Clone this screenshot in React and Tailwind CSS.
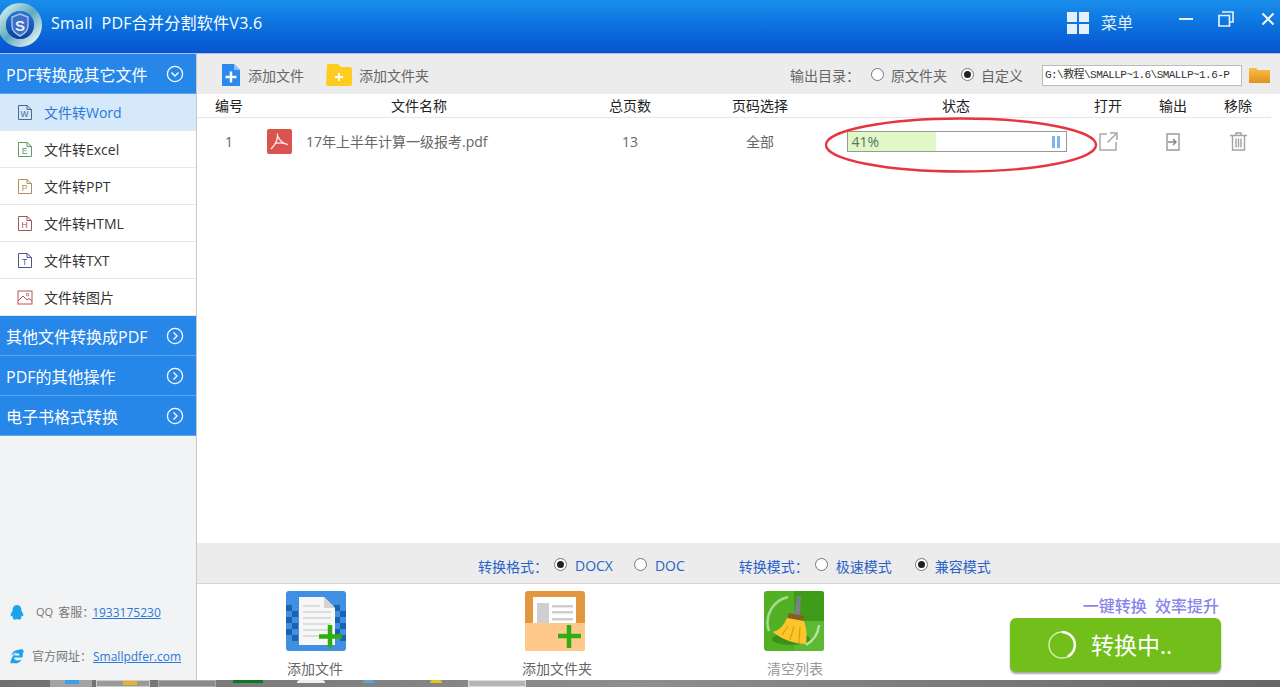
import React from "react";

const FONT = { fontFamily: '"Open Sans","Noto Sans CJK SC",sans-serif' };

function Logo() {
  return (
    <svg width="44" height="46" viewBox="0 0 44 46" className="shrink-0 mt-[3px]">
      <defs>
        <linearGradient id="ring" x1="0" y1="0" x2="1" y2="1">
          <stop offset="0" stopColor="#d5f0ea" />
          <stop offset="0.5" stopColor="#5fa9bd" />
          <stop offset="1" stopColor="#eef8f2" />
        </linearGradient>
        <linearGradient id="ball" x1="0" y1="0" x2="0" y2="1">
          <stop offset="0" stopColor="#2b76d8" />
          <stop offset="1" stopColor="#0e3f9f" />
        </linearGradient>
      </defs>
      <circle cx="20" cy="23" r="18" fill="none" stroke="url(#ring)" strokeWidth="8" />
      <circle cx="20" cy="23" r="14" fill="url(#ball)" />
      <path d="M20 12 L28 15 V24 C28 29 24 32 20 34 C16 32 12 29 12 24 V15 Z" fill="#3d6fc4" stroke="#a9c7ee" strokeWidth="1.4" />
      <text x="20" y="29" textAnchor="middle" fontSize="15" fontWeight="700" fill="#e6f0fb" fontFamily="Liberation Sans">S</text>
    </svg>
  );
}

function Circle({ down }) {
  return (
    <svg width="18" height="18" viewBox="0 0 18 18" className="shrink-0">
      <circle cx="9" cy="9" r="7.6" fill="none" stroke="#fff" strokeWidth="1.3" />
      {down ? (
        <path d="M5.5 7.5 L9 11 L12.5 7.5" fill="none" stroke="#fff" strokeWidth="1.4" />
      ) : (
        <path d="M7.5 5.5 L11 9 L7.5 12.5" fill="none" stroke="#fff" strokeWidth="1.4" />
      )}
    </svg>
  );
}

function DocIcon({ letter, color }) {
  return (
    <svg width="16" height="17" viewBox="0 0 16 17" className="shrink-0">
      <path d="M1.5 1.5 H10 L14.5 5.5 V15.5 H1.5 Z M10 1.5 V5.5 H14.5" fill="none" stroke={color} strokeWidth="1" />
      <text x="7.5" y="13" textAnchor="middle" fontSize="8.5" fill={color} fontFamily="Liberation Sans">{letter}</text>
    </svg>
  );
}

function PicIcon() {
  const c = "#b5545c";
  return (
    <svg width="16" height="15" viewBox="0 0 16 15" className="shrink-0">
      <rect x="1" y="1" width="14" height="13" fill="none" stroke={c} strokeWidth="1" />
      <path d="M1 11 L6 6 L10 10 L12 8.5 L15 11" fill="none" stroke={c} strokeWidth="1" />
      <circle cx="10.5" cy="4.5" r="1.3" fill="none" stroke={c} strokeWidth="0.9" />
    </svg>
  );
}

function SectionHead({ label, down }) {
  return (
    <div className="flex items-center justify-between h-[40px] bg-[#2787e8] border-b border-[#5aa5ee] pl-[6px] pr-[12px] text-white text-[16px]">
      <span className="pt-[2px]">{label}</span>
      <Circle down={down} />
    </div>
  );
}

function NavItem({ label, icon, active }) {
  return (
    <div className={`flex items-center h-[37px] pl-[17px] gap-[11px] text-[14px] border-b border-[#e8e8e8] ${active ? "bg-[#d6e9fb] text-[#2a78d8]" : "bg-white text-[#333]"}`}>
      {icon}
      <span>{label}</span>
    </div>
  );
}

function Radio({ on }) {
  return (
    <span className="flex items-center justify-center w-[13px] h-[13px] rounded-full border border-[#777] bg-white shrink-0">
      {on && <span className="block w-[7px] h-[7px] rounded-full bg-[#222]" />}
    </span>
  );
}

function PdfIcon() {
  return (
    <svg width="25" height="25" viewBox="0 0 25 25">
      <rect x="0" y="0" width="25" height="25" rx="2" fill="#d9534f" />
      <path d="M10.5 4.5 C11 9 9 15 4 20 M8.5 14.5 C13 13 17 14 21 15.5 M11 7.5 C12 10 15 14 20.5 15.5" fill="none" stroke="#fbe9e7" strokeWidth="1.3" />
    </svg>
  );
}

function BigFile() {
  const squares = [];
  for (let r = 0; r < 6; r++) {
    for (let c = 0; c < 2; c++) {
      if ((r + c) % 2 === 0) {
        squares.push(<rect key={`l${r}${c}`} x={c * 6} y={14 + r * 6} width="6" height="6" fill="#1c62ae" />);
        squares.push(<rect key={`r${r}${c}`} x={48 + c * 6} y={14 + r * 6} width="6" height="6" fill="#1c62ae" />);
      }
    }
  }
  return (
    <svg width="60" height="60" viewBox="0 0 60 60">
      <rect width="60" height="60" rx="3" fill="#3f8fe2" />
      {squares}
      <path d="M13 6 H38 L49 17 V54 H13 Z" fill="#f6f6f6" />
      <path d="M38 6 L49 17 H38 Z" fill="#d6d2cc" />
      {[14, 20, 26, 32, 38, 44].map((y) => (
        <rect key={y} x="17" y={y} width={y < 20 ? 17 : 28} height="2" fill="#dcdcdc" />
      ))}
      <path d="M44 34 V57 M33 45.5 H56" stroke="#2fae12" strokeWidth="4.5" />
    </svg>
  );
}

function BigFolder() {
  return (
    <svg width="60" height="60" viewBox="0 0 60 60">
      <rect width="60" height="60" rx="3" fill="#e2973f" />
      <rect x="8" y="6" width="43" height="36" fill="#fff" />
      <rect x="12" y="12" width="12" height="24" fill="#cfcfcf" />
      {[14, 20, 27, 33].map((y) => (
        <rect key={y} x="27" y={y} width="21" height="2.5" fill="#cfcfcf" />
      ))}
      <path d="M0 32 H60 V57 A3 3 0 0 1 57 60 H3 A3 3 0 0 1 0 57 Z" fill="#ffc98c" />
      <path d="M44 34 V57 M33 45 H56" stroke="#2fae12" strokeWidth="4.5" />
    </svg>
  );
}

function BigBroom() {
  return (
    <svg width="60" height="60" viewBox="0 0 60 60">
      <rect width="60" height="60" rx="3" fill="#52b025" />
      <path d="M30 0 H57 A3 3 0 0 1 60 3 V30 H30 Z" fill="#3f9c18" />
      <path d="M30 30 H60 V57 A3 3 0 0 1 57 60 H30 Z" fill="#64bb38" opacity="0.75" />
      <path d="M5 40 A26 26 0 0 1 24 6" fill="none" stroke="#a8d98c" strokeWidth="2.5" />
      <path d="M55 34 A26 26 0 0 1 42 54" fill="none" stroke="#b8e2a0" strokeWidth="2.5" />
      <ellipse cx="27" cy="48" rx="19" ry="6" fill="#2e8412" opacity="0.7" />
      <path d="M33 5 L37 5 L36 24 L30 24 Z" fill="#78808a" />
      <path d="M25 22 L40 25 L39 31 L23 28 Z" fill="#8a5d22" />
      <path d="M23 27 L40 30 C43 38 43 46 42 53 C32 53 18 49 9 41 C16 39 20 34 23 27 Z" fill="#fcc62a" />
      <path d="M24 35 L18 44 M30 35 L26 49 M36 36 L35 52" stroke="#e09d14" strokeWidth="1.2" />
    </svg>
  );
}

const cols = "grid grid-cols-[64px_316px_106px_154px_238px_66px_64px_66px]";

export default function App() {
  return (
    <div className="relative w-[1280px] h-[687px] overflow-hidden flex flex-col bg-white" style={FONT}>
      {/* title bar */}
      <header className="h-[54px] shrink-0 flex items-center pb-[7px] bg-gradient-to-b from-[#1a8eec] to-[#0a52cf] border-b border-[#9cc4ee] text-white">
        <Logo />
        <h1 className="ml-[7px] text-[16px] tracking-[0.25px] font-normal">Small&nbsp; PDF合并分割软件V3.6</h1>
        <div className="ml-auto flex items-center">
          <svg width="22" height="22" viewBox="0 0 22 22">
            <path d="M0 0 H10 V10 H0 Z M12 0 H22 V10 H12 Z M0 12 H10 V22 H0 Z M12 12 H22 V22 H12 Z" fill="#e6f0fb" />
          </svg>
          <span className="ml-[12px] text-[16px] text-[#e6f0fb]">菜单</span>
          <svg width="14" height="14" viewBox="0 0 14 14" className="ml-[46px] mb-[8px]">
            <rect x="0" y="6" width="14" height="2" fill="#e6f0fb" />
          </svg>
          <svg width="16" height="16" viewBox="0 0 16 16" className="ml-[25px] mb-[8px]">
            <path d="M4 1 H15 V11 H12 M1 4.5 H11.5 V15 H1 Z" fill="none" stroke="#e6f0fb" strokeWidth="1.7" />
          </svg>
          <svg width="14" height="14" viewBox="0 0 14 14" className="ml-[27px] mr-[5px] mb-[8px]">
            <path d="M1.5 1.5 L12.5 12.5 M12.5 1.5 L1.5 12.5" stroke="#f4f8fd" strokeWidth="2" />
          </svg>
        </div>
      </header>

      <div className="flex flex-1 min-h-0">
        {/* sidebar */}
        <aside className="w-[197px] shrink-0 flex flex-col bg-[#f1f3f4] border-r border-[#c8c8c8]">
          <SectionHead label="PDF转换成其它文件" down />
          <NavItem active label="文件转Word" icon={<DocIcon letter="W" color="#4a6a8a" />} />
          <NavItem label="文件转Excel" icon={<DocIcon letter="E" color="#5d9c62" />} />
          <NavItem label="文件转PPT" icon={<DocIcon letter="P" color="#b08f5e" />} />
          <NavItem label="文件转HTML" icon={<DocIcon letter="H" color="#a3525e" />} />
          <NavItem label="文件转TXT" icon={<DocIcon letter="T" color="#4a5590" />} />
          <NavItem label="文件转图片" icon={<PicIcon />} />
          <SectionHead label="其他文件转换成PDF" />
          <SectionHead label="PDF的其他操作" />
          <SectionHead label="电子书格式转换" />

          <div className="mt-auto flex flex-col text-[12px] text-[#777] pl-[10px] pb-[15px] gap-[27px]">
            <div className="flex items-center h-[17px]">
              <svg width="14" height="15" viewBox="0 0 14 15" className="shrink-0">
                <path d="M7 0 C10.5 0 11.5 3 11.5 6 C13 8 14 10.5 13 11.5 L11.5 10.5 C11.5 12 11 13 11 13.5 C11.5 14.5 8.5 15 7 14 C5.5 15 2.5 14.5 3 13.5 C3 13 2.5 12 2.5 10.5 L1 11.5 C0 10.5 1 8 2.5 6 C2.5 3 3.5 0 7 0 Z" fill="#1ba3ec" />
              </svg>
              <span className="ml-[12px] text-[11px]">QQ</span>
              <span className="ml-[5px]">客服：</span>
              <a className="-ml-[2px] text-[#2a78d8] underline">1933175230</a>
            </div>
            <div className="flex items-center h-[17px]">
              <svg width="14" height="15" viewBox="0 0 14 15" className="shrink-0">
                <path d="M12.5 8.5 H4 C4 11.5 8 12.5 11.5 10.5 C10 14 6 15 3 14 C1.5 15 0 14.5 0.5 12.5 C1 10 3 6 6.5 3.5 C4.5 3.5 2.5 5.5 1.5 7 C2 3 5 1 8 1 C10 0 13 0 13.5 1.5 C14 3 13 4 12.5 4.5 C13.5 6 12.5 7 12.5 8.5 Z M4.5 6.5 H9.5 C9.5 3.5 5 3.5 4.5 6.5 Z" fill="#1ba3ec" fillRule="evenodd" />
              </svg>
              <span className="ml-[8px]">官方网址：</span>
              <a className="ml-[1px] text-[#2a78d8] underline">Smallpdfer.com</a>
            </div>
          </div>
        </aside>

        {/* main */}
        <main className="flex-1 min-w-0 flex flex-col">
          <div className="h-[40px] shrink-0 flex items-center bg-[#ececec] text-[14px] text-[#666] pl-[25px] pr-[10px] pt-[2px]">
            <svg width="18" height="22" viewBox="0 0 18 22" className="shrink-0">
              <path d="M0 0 H12 L18 6 V22 H0 Z" fill="#2b88ef" />
              <path d="M12 0 L18 6 H12 Z" fill="#8fc0f7" />
              <path d="M9 7.5 V18.5 M3.5 13 H14.5" stroke="#fff" strokeWidth="2.4" />
            </svg>
            <span className="ml-[8px] pt-[1px]">添加文件</span>
            <svg width="26" height="22" viewBox="0 0 26 22" className="ml-[22px] shrink-0">
              <path d="M1 1 A1 1 0 0 1 2 0 H12 L15 3 H24 A2 2 0 0 1 26 5 V20 A2 2 0 0 1 24 22 H2 A2 2 0 0 1 0 20 Z" fill="#ffcb1f" />
              <path d="M13 9 V17 M9 13 H17" stroke="#fff" strokeWidth="2" />
            </svg>
            <span className="ml-[7px] pt-[1px]">添加文件夹</span>
            <div className="ml-auto flex items-center">
              <span className="pt-[1px]">输出目录：</span>
              <span className="ml-[11px] mb-[2px]"><Radio /></span>
              <span className="ml-[7px] pt-[1px]">原文件夹</span>
              <span className="ml-[14px] mb-[2px]"><Radio on /></span>
              <span className="ml-[7px] pt-[1px]">自定义</span>
              <div className="ml-[19px] w-[200px] h-[21px] bg-white border border-[#bbb] pl-[2px] text-[11px] leading-[19px] text-[#333] overflow-hidden whitespace-nowrap" style={{ fontFamily: '"Liberation Mono","Noto Sans CJK SC",monospace', letterSpacing: "-0.55px" }}>
                G:\教程\SMALLP~1.6\SMALLP~1.6-P
              </div>
              <svg width="21" height="16" viewBox="0 0 21 16" className="ml-[7px]">
                <defs>
                  <linearGradient id="fold" x1="0" y1="0" x2="0" y2="1">
                    <stop offset="0" stopColor="#f7c04a" />
                    <stop offset="1" stopColor="#e2911a" />
                  </linearGradient>
                </defs>
                <path d="M0 1 H7 L9 3 H21 V16 H0 Z" fill="url(#fold)" />
              </svg>
            </div>
          </div>

          <div className={`${cols} h-[24px] shrink-0 items-center text-center text-[14px] text-[#222] border-b border-[#e6e6e6] w-[1074px]`}>
            <span>编号</span>
            <span>文件名称</span>
            <span>总页数</span>
            <span>页码选择</span>
            <span>状态</span>
            <span>打开</span>
            <span>输出</span>
            <span>移除</span>
          </div>

          <div className={`${cols} h-[47px] shrink-0 items-center text-center text-[14px] text-[#666] w-[1074px]`}>
            <span>1</span>
            <div className="flex items-center pl-[6px] text-left">
              <PdfIcon />
              <span className="ml-[14px] whitespace-nowrap">17年上半年计算一级报考.pdf</span>
            </div>
            <span>13</span>
            <span>全部</span>
            <div className="flex justify-center pl-[1px]">
              <div className="w-[220px] h-[21px] border border-[#999] bg-white flex items-center">
                <div className="w-[88px] h-full bg-[#e1f7c8] pl-[4px] text-[14px] text-[#55775a] leading-[20px] text-left">41%</div>
                <span className="ml-auto mr-[6px] flex gap-[2px]">
                  <span className="block w-[3px] h-[12px] bg-[#7fb3ea]" />
                  <span className="block w-[3px] h-[12px] bg-[#7fb3ea]" />
                </span>
              </div>
            </div>
            <div className="flex justify-center">
              <svg width="19" height="19" viewBox="0 0 19 19">
                <path d="M8 2 H1 V18 H17 V10 M11 1 H18 V8 M18 1 L8.5 10.5" fill="none" stroke="#a8a8a8" strokeWidth="1.5" />
              </svg>
            </div>
            <div className="flex justify-center">
              <svg width="14" height="18" viewBox="0 0 14 18">
                <path d="M1 1 H13 V17 H1 Z" fill="none" stroke="#999" strokeWidth="1.4" />
                <path d="M2 9 H9 M7 6 L10 9 L7 12" fill="none" stroke="#888" strokeWidth="1.5" />
              </svg>
            </div>
            <div className="flex justify-center">
              <svg width="17" height="19" viewBox="0 0 17 19">
                <path d="M0 3.5 H17 M6 3.5 V1 H11 V3.5 M2.5 3.5 V18 H14.5 V3.5 M6 6.5 V15.5 M8.5 6.5 V15.5 M11 6.5 V15.5" fill="none" stroke="#a2a2a2" strokeWidth="1.4" />
              </svg>
            </div>
          </div>

          <div className="flex-1" />

          <div className="h-[41px] shrink-0 flex items-center bg-[#ececec] border-b border-[#d5d5d5] text-[14px] text-[#2a62c8] pl-[281px] pt-[6px]">
            <span>转换格式：</span>
            <span className="ml-[6px] mb-[4px]"><Radio on /></span>
            <span className="ml-[8px] mb-[2px]">DOCX</span>
            <span className="ml-[21px] mb-[4px]"><Radio /></span>
            <span className="ml-[8px] mb-[2px]">DOC</span>
            <span className="ml-[54px]">转换模式：</span>
            <span className="ml-[6px] mb-[4px]"><Radio /></span>
            <span className="ml-[8px]">极速模式</span>
            <span className="ml-[23px] mb-[4px]"><Radio on /></span>
            <span className="ml-[7px]">兼容模式</span>
          </div>

          <div className="h-[96px] shrink-0 flex items-start bg-white pt-[7px] text-[14px] pl-[59px] pr-[59px]">
            <div className="w-[120px] flex flex-col items-center text-[#666] gap-[7px]">
              <BigFile />
              <span className="pr-[2px]">添加文件</span>
            </div>
            <div className="ml-[119px] w-[120px] flex flex-col items-center text-[#666] gap-[7px]">
              <BigFolder />
              <span className="pl-[4px]">添加文件夹</span>
            </div>
            <div className="ml-[119px] w-[120px] flex flex-col items-center text-[#999] gap-[7px]">
              <BigBroom />
              <span className="pl-[2px]">清空列表</span>
            </div>
            <div className="ml-auto w-[211px] flex flex-col items-end pt-[4px]">
              <span className="text-[16px] leading-[22px] font-medium text-[#8a85ea] pr-[2px]">一键转换&nbsp;&nbsp;效率提升</span>
              <div className="mt-[1px] w-full h-[54px] flex items-center justify-center rounded-[6px] bg-[#72bf1c] shadow-[0_2px_2px_rgba(0,0,0,0.35)] text-white text-[23px] pr-[12px]">
                <svg width="30" height="30" viewBox="0 0 30 30" className="mr-[14px]">
                  <circle cx="15" cy="15" r="13" fill="none" stroke="#d4f0b0" strokeWidth="1.4" />
                  <path d="M15 2 A13 13 0 0 1 21 26.5" fill="none" stroke="#fff" strokeWidth="2.6" />
                </svg>
                <span>转换中..</span>
              </div>
            </div>
          </div>
        </main>
      </div>

      {/* desktop taskbar strip */}
      <div className="h-[7px] shrink-0 flex items-stretch overflow-hidden bg-gradient-to-r from-[#707070] via-[#8e8e8e] to-[#666]">
        <div className="ml-[50px] w-[42px] bg-[#a4a4a4]"><div className="ml-[15px] w-[14px] h-[4px] bg-[#3aa0e8]" /></div>
        <div className="ml-[4px] w-[54px] bg-[#9a9a9a] border border-[#ccc]"><div className="ml-[26px] w-[14px] h-[4px] bg-[#e7b52c]" /></div>
        <div className="ml-[8px] w-[58px] bg-[#8a8a8a] border border-[#aaa]" />
        <div className="ml-[17px] w-[30px] h-[3px] bg-[#0c7a1c]" />
        <div className="ml-[34px] w-[28px] h-[3px] bg-[#eeeeee] rounded-t" />
        <div className="ml-[38px] w-[12px] h-[3px] bg-[#5aa5d8] rounded-t" />
        <div className="ml-[55px] w-[12px] h-[3px] bg-[#e9c21c] rounded-t" />
        <div className="ml-[26px] w-[58px] bg-[#b5b5b5] border border-[#ddd]" />
      </div>

      {/* red hand-drawn annotation over the row */}
      <svg width="276" height="58" viewBox="0 0 276 58" className="absolute left-[823px] top-[116px] pointer-events-none">
        <ellipse cx="138" cy="29" rx="135" ry="26.5" fill="none" stroke="#e8343c" strokeWidth="2.4" />
      </svg>
    </div>
  );
}
